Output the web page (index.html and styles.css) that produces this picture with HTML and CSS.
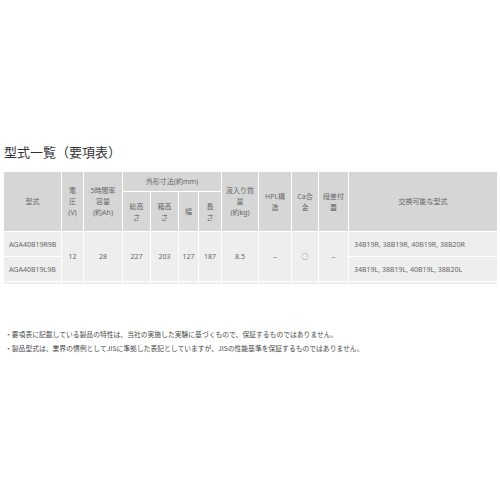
FILE: index.html
```html
<!DOCTYPE html>
<html lang="ja">
<head>
<meta charset="utf-8">
<link rel="stylesheet" href="styles.css">
</head>
<body>
<main class="page">
  <h2 class="title">型式一覧（要項表）</h2>
  <table class="spec">
    <colgroup>
      <col class="c1"><col class="c2"><col class="c3"><col class="c4"><col class="c5"><col class="c6"><col class="c7"><col class="c8"><col class="c9"><col class="c10"><col class="c11"><col class="c12">
    </colgroup>
    <thead>
      <tr class="h1">
        <th rowspan="2">型式</th>
        <th rowspan="2">電<br>圧<br>(V)</th>
        <th rowspan="2">5時間率<br>容量<br>(約Ah)</th>
        <th colspan="4">外形寸法(約mm)</th>
        <th rowspan="2">液入り質<br>量<br>(約kg)</th>
        <th rowspan="2">HPL構<br>造</th>
        <th rowspan="2">Ca合<br>金</th>
        <th rowspan="2">段差付<br>蓋</th>
        <th rowspan="2">交換可能な型式</th>
      </tr>
      <tr class="h2">
        <th>総高<br>さ</th>
        <th>箱高<br>さ</th>
        <th>幅</th>
        <th>長<br>さ</th>
      </tr>
    </thead>
    <tbody>
      <tr class="r">
        <td class="left">AGA40B19R9B</td>
        <td rowspan="2">12</td>
        <td rowspan="2">28</td>
        <td rowspan="2">227</td>
        <td rowspan="2">203</td>
        <td rowspan="2">127</td>
        <td rowspan="2">187</td>
        <td rowspan="2">8.5</td>
        <td rowspan="2">–</td>
        <td rowspan="2">○</td>
        <td rowspan="2">–</td>
        <td class="left">34B19R, 38B19R, 40B19R, 38B20R</td>
      </tr>
      <tr class="r">
        <td class="left">AGA40B19L9B</td>
        <td class="left">34B19L, 38B19L, 40B19L, 38B20L</td>
      </tr>
      <tr class="stub">
        <td></td><td></td><td></td><td></td><td></td><td></td><td></td><td></td><td></td><td></td><td></td><td></td>
      </tr>
    </tbody>
  </table>
  <ul class="notes">
    <li>・要項表に記載している製品の特性は、当社の実施した実験に基づくもので、保証するものではありません。</li>
    <li>・製品型式は、業界の慣例としてJISに準拠した表記としていますが、JISの性能基準を保証するものではありません。</li>
  </ul>
</main>
</body>
</html>
```
FILE: styles.css
```css
html, body {
  margin: 0;
  padding: 0;
  background: #fff;
}
body {
  font-family: "Noto Sans", "Noto Sans CJK JP", sans-serif;
  color: #555;
}
.page {
  padding: 142px 3px 0 3px;
}
.title {
  margin: 0 0 10px 1px;
  font-family: "Noto Sans CJK JP", sans-serif;
  font-size: 13px;
  font-weight: normal;
  line-height: 19px;
  color: #333;
}
.spec {
  width: 494px;
  table-layout: fixed;
  border-collapse: collapse;
  font-size: 7px;
  line-height: 11px;
}
.c1 { width: 58px; }
.c2 { width: 22px; }
.c3 { width: 39px; }
.c4 { width: 28px; }
.c5 { width: 28px; }
.c6 { width: 20px; }
.c7 { width: 23px; }
.c8 { width: 37px; }
.c9 { width: 33px; }
.c10 { width: 27px; }
.c11 { width: 30px; }
.c12 { width: 149px; }
.spec th, .spec td {
  border: 1px solid #fff;
  padding: 0;
  text-align: center;
  vertical-align: middle;
  font-weight: normal;
  overflow: hidden;
  white-space: nowrap;
}
.spec th {
  background: #d6d6d6;
  color: #666;
}
.spec td {
  background: #eeeeee;
  color: #666;
}
.h1 { height: 20px; }
.h2 { height: 40px; }
.r { height: 25px; }
.spec td.left {
  text-align: left;
  padding-left: 5px;
}
.stub td {
  height: 2px;
  line-height: 0;
  font-size: 0;
}
.notes {
  list-style: none;
  margin: 42px 0 0 0;
  padding: 0 0 0 2px;
  font-family: "Noto Sans CJK JP", sans-serif;
  font-size: 6.8px;
  line-height: 14px;
  color: #4a4a4a;
}
```
